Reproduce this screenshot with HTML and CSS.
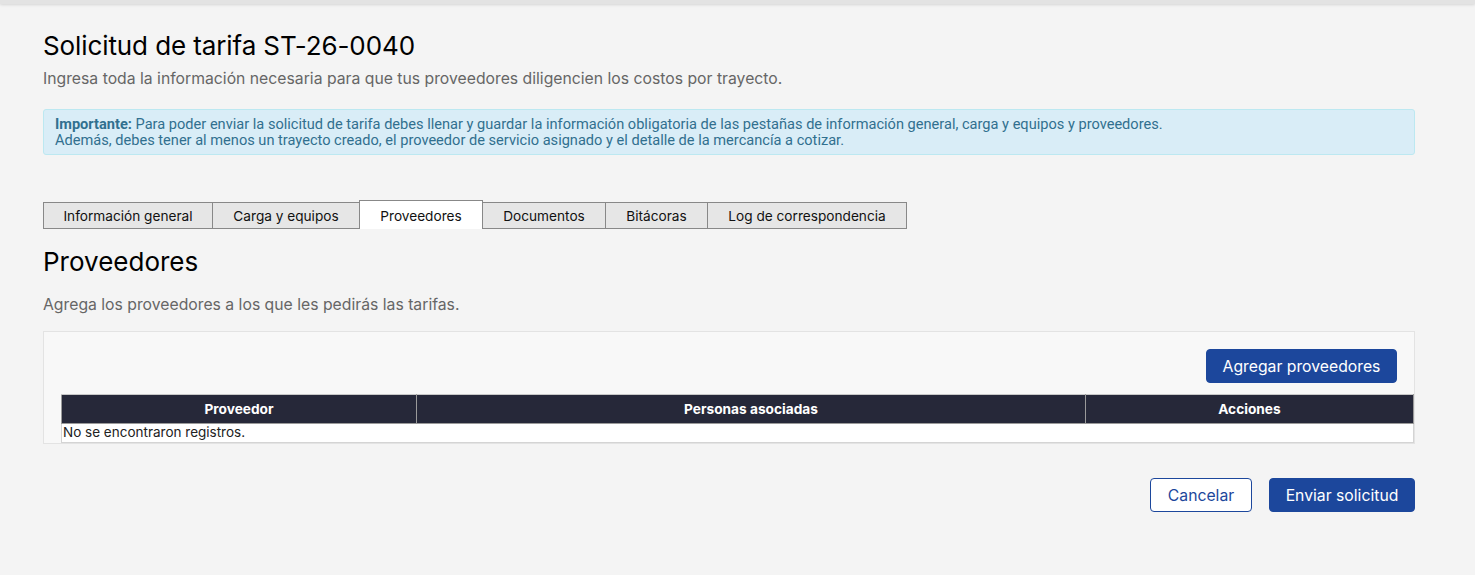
FILE: index.html
```html
<!DOCTYPE html>
<html lang="es">
<head>
<meta charset="utf-8">
<link rel="stylesheet" href="styles.css">
</head>
<body>
<div class="topbar"></div>
<main class="page">
  <h1 class="title">Solicitud de tarifa ST-26-0040</h1>
  <p class="subtitle">Ingresa toda la información necesaria para que tus proveedores diligencien los costos por trayecto.</p>
  <div class="alert"><strong>Importante:</strong> Para poder enviar la solicitud de tarifa debes llenar y guardar la información obligatoria de las pestañas de información general, carga y equipos y proveedores.<br>Además, debes tener al menos un trayecto creado, el proveedor de servicio asignado y el detalle de la mercancía a cotizar.</div>

  <div class="tabs">
    <div class="tab t1">Información general</div>
    <div class="tab t2">Carga y equipos</div>
    <div class="tab t3 active">Proveedores</div>
    <div class="tab t4">Documentos</div>
    <div class="tab t5">Bitácoras</div>
    <div class="tab t6">Log de correspondencia</div>
  </div>

  <h2 class="section-title">Proveedores</h2>
  <p class="section-desc">Agrega los proveedores a los que les pedirás las tarifas.</p>

  <div class="panel">
    <div class="panel-actions">
      <button class="btn btn-primary btn-add">Agregar proveedores</button>
    </div>
    <table class="grid">
      <thead>
        <tr><th class="c1">Proveedor</th><th class="c2">Personas asociadas</th><th class="c3">Acciones</th></tr>
      </thead>
      <tbody>
        <tr><td colspan="3">No se encontraron registros.</td></tr>
      </tbody>
    </table>
  </div>

  <div class="footer-actions">
    <button class="btn btn-outline">Cancelar</button>
    <button class="btn btn-primary btn-send">Enviar solicitud</button>
  </div>
</main>
</body>
</html>
```

FILE: styles.css
```css
html, body {
  margin: 0;
  padding: 0;
  background: #f4f4f4;
  font-family: Inter, "Noto Sans", sans-serif;
  height: 100%;
}
.topbar {
  height: 4px;
  background: #e3e3e3;
  box-shadow: 0 1px 3px rgba(0,0,0,0.12);
}
.page {
  padding: 0 60px 0 43px;
  box-sizing: border-box;
  width: 1475px;
}
.title {
  margin: 24px 0 0;
  font-size: 26px;
  font-weight: 400;
  line-height: 36px;
  color: #000;
  letter-spacing: -0.1px;
}
.subtitle {
  margin: 5px 0 0;
  font-size: 15.75px;
  line-height: 20px;
  color: #666;
}
.alert {
  margin-top: 20px;
  background: #d9edf7;
  border: 1px solid #bce8f1;
  border-radius: 3px;
  color: #31708f;
  font-family: Roboto, "Liberation Sans", sans-serif;
  font-size: 14.6px;
  line-height: 16px;
  padding: 6px 11px 6px;
  width: 1372px;
  box-sizing: border-box;
}
.alert strong { font-weight: 700; }
.tabs {
  display: flex;
  margin-top: 45px;
  height: 29px;
  align-items: flex-end;
}
.tab {
  box-sizing: border-box;
  height: 27px;
  background: #e6e6e6;
  border: 1px solid #888;
  border-left-width: 0;
  font-size: 13.65px;
  color: #111;
  display: flex;
  align-items: center;
  justify-content: center;
}
.tab.t1 { width: 170px; border-left-width: 1px; }
.tab.t2 { width: 147px; }
.tab.t3 { width: 123px; }
.tab.t4 { width: 123px; }
.tab.t5 { width: 102px; }
.tab.t6 { width: 199px; }
.tab.active {
  background: #fff;
  height: 29px;
  border-bottom: 0;
  border-left-width: 1px;
  margin-left: -1px;
  width: 124px;
  padding-top: 2px;
}
.section-title {
  margin: 16px 0 0;
  font-size: 26px;
  font-weight: 400;
  line-height: 34px;
  color: #000;
}
.section-desc {
  margin: 16px 0 0;
  font-size: 15.75px;
  line-height: 20px;
  color: #666;
}
.panel {
  margin-top: 16px;
  width: 1372px;
  box-sizing: border-box;
  background: #f8f8f8;
  border: 1px solid #e3e3e3;
  padding: 17px 0 0 17px;
}
.panel-actions {
  display: flex;
  justify-content: flex-end;
  margin-right: 17px;
}
.btn {
  font-family: Inter, "Noto Sans", sans-serif;
  font-size: 15.75px;
  border-radius: 4px;
  box-sizing: border-box;
  cursor: pointer;
  padding-bottom: 1px;
}
.btn-primary {
  background: #1c479c;
  color: #fff;
  border: 1px solid #1c479c;
}
.btn-outline {
  background: #fff;
  color: #1c479c;
  border: 1px solid #1c479c;
}
.btn-add {
  width: 191px;
  height: 34px;
}
.grid {
  margin-top: 11px;
  width: 1353px;
  border-collapse: collapse;
  font-size: 13.5px;
  background: #fff;
}
.grid th {
  background: #262839;
  color: #fff;
  font-weight: 700;
  font-size: 13.7px;
  height: 28px;
  padding: 0;
  border: 1px solid #9a9a9a;
  border-top: 1px solid #c8c8c8;
  border-bottom: 1px solid #9a9a9a;
  text-align: center;
}
.grid th.c1 { width: 355px; }
.grid th.c2 { width: 670px; }
.grid th.c3 { width: 328px; }
.grid td {
  padding: 0 0 0 1px;
  height: 18px;
  line-height: 17px;
  vertical-align: top;
  color: #222;
  border: 1px solid #d4d4d4;
  border-top: 0;
}
.footer-actions {
  display: flex;
  justify-content: flex-end;
  gap: 17px;
  margin-top: 34px;
  width: 1372px;
}
.footer-actions .btn {
  height: 34px;
}
.btn-outline { width: 102px; }
.btn-send { width: 146px; }
```
